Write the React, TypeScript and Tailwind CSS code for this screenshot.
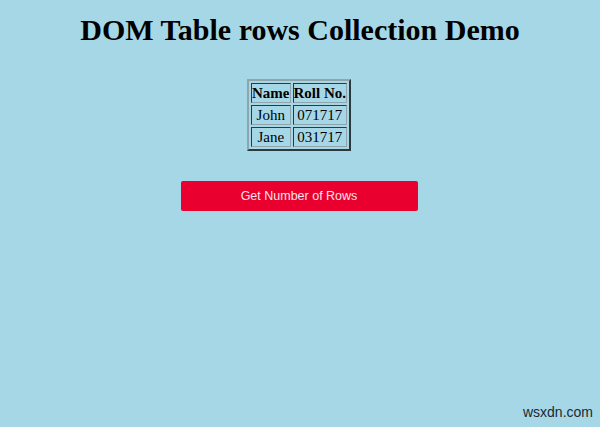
export default function App() {
  const rows = [
    { name: 'John', roll: '071717' },
    { name: 'Jane', roll: '031717' },
  ]

  const cell =
    'p-0 leading-[18px] text-center border border-t-[#2c3a40] border-l-[#2c3a40] border-b-[#8fa4ab] border-r-[#8fa4ab]'

  return (
    <div className="relative w-[600px] h-[427px] bg-[#a6d7e7] overflow-hidden font-['Liberation_Serif',serif] text-black">
      <h1 className="text-center text-[30px] font-bold leading-[34px] pt-[13px]">DOM Table rows Collection Demo</h1>

      <div className="flex justify-center mt-[32px]">
        <table className="border-separate border-spacing-[2px] border-2 border-t-[#8fa4ab] border-l-[#8fa4ab] border-b-[#2c3a40] border-r-[#2c3a40] text-[15px] -translate-x-px">
          <thead>
            <tr>
              <th className={cell}>Name</th>
              <th className={cell}>Roll No.</th>
            </tr>
          </thead>
          <tbody>
            {rows.map((r) => (
              <tr key={r.name}>
                <td className={cell}>{r.name}</td>
                <td className={cell}>{r.roll}</td>
              </tr>
            ))}
          </tbody>
        </table>
      </div>

      <div className="flex justify-center mt-[30px]">
        <button className="w-[237px] h-[30px] bg-[#e9002e] rounded-[2px] text-[#f4e6ea] text-[12.5px] font-['Liberation_Sans',sans-serif] -translate-x-px">
          Get Number of Rows
        </button>
      </div>

      <div className="absolute right-[7px] bottom-[4px] text-[14px] text-[#1a2a30] font-['Liberation_Sans',sans-serif]">wsxdn.com</div>
    </div>
  )
}
